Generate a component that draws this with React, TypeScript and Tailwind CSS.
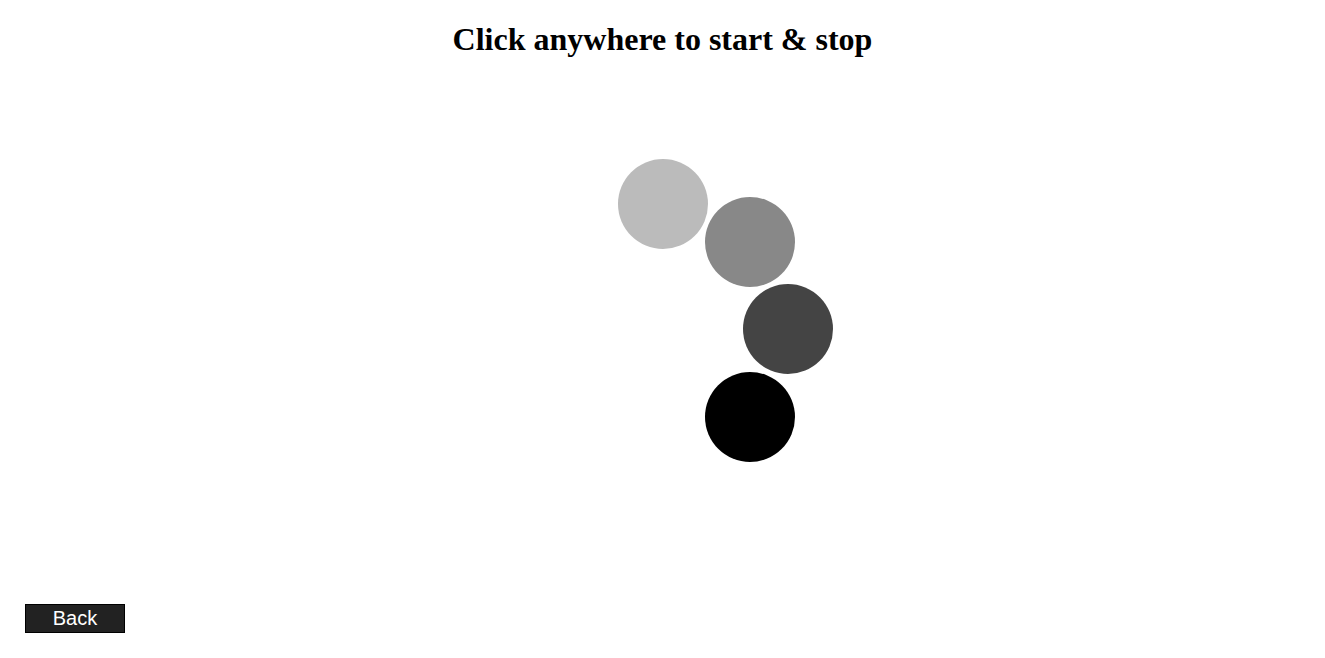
import React from 'react';

// circles on the orbit canvas, page coordinates of their top-left corner
const dots = [
    { left: 618, top: 159, color: 'bg-[#bbbbbb]' },
    { left: 705, top: 197, color: 'bg-[#888888]' },
    { left: 743, top: 284, color: 'bg-[#444444]' },
    { left: 705, top: 372, color: 'bg-[#000000]' },
];

const App: React.FC = () => {
    return (
        <div className="relative h-screen w-full bg-white flex flex-col overflow-hidden">
            <h1 className="mt-[21px] text-center text-[32px] font-bold leading-[37px] text-black font-['Liberation_Serif',serif]">
                Click anywhere to start &amp; stop
            </h1>
            <div className="flex-1" />
            {dots.map((d, i) => (
                <div
                    key={i}
                    className={`absolute w-[90px] h-[90px] rounded-full ${d.color}`}
                    style={{ left: d.left, top: d.top }}
                />
            ))}
            <div className="px-[25px] pb-[25px]">
                <button
                    type="button"
                    className="w-[100px] h-[29px] bg-[#222222] border border-black text-white text-[20px] leading-[27px] font-['Liberation_Sans',Arial,sans-serif]"
                >
                    Back
                </button>
            </div>
        </div>
    );
};

export default App;
